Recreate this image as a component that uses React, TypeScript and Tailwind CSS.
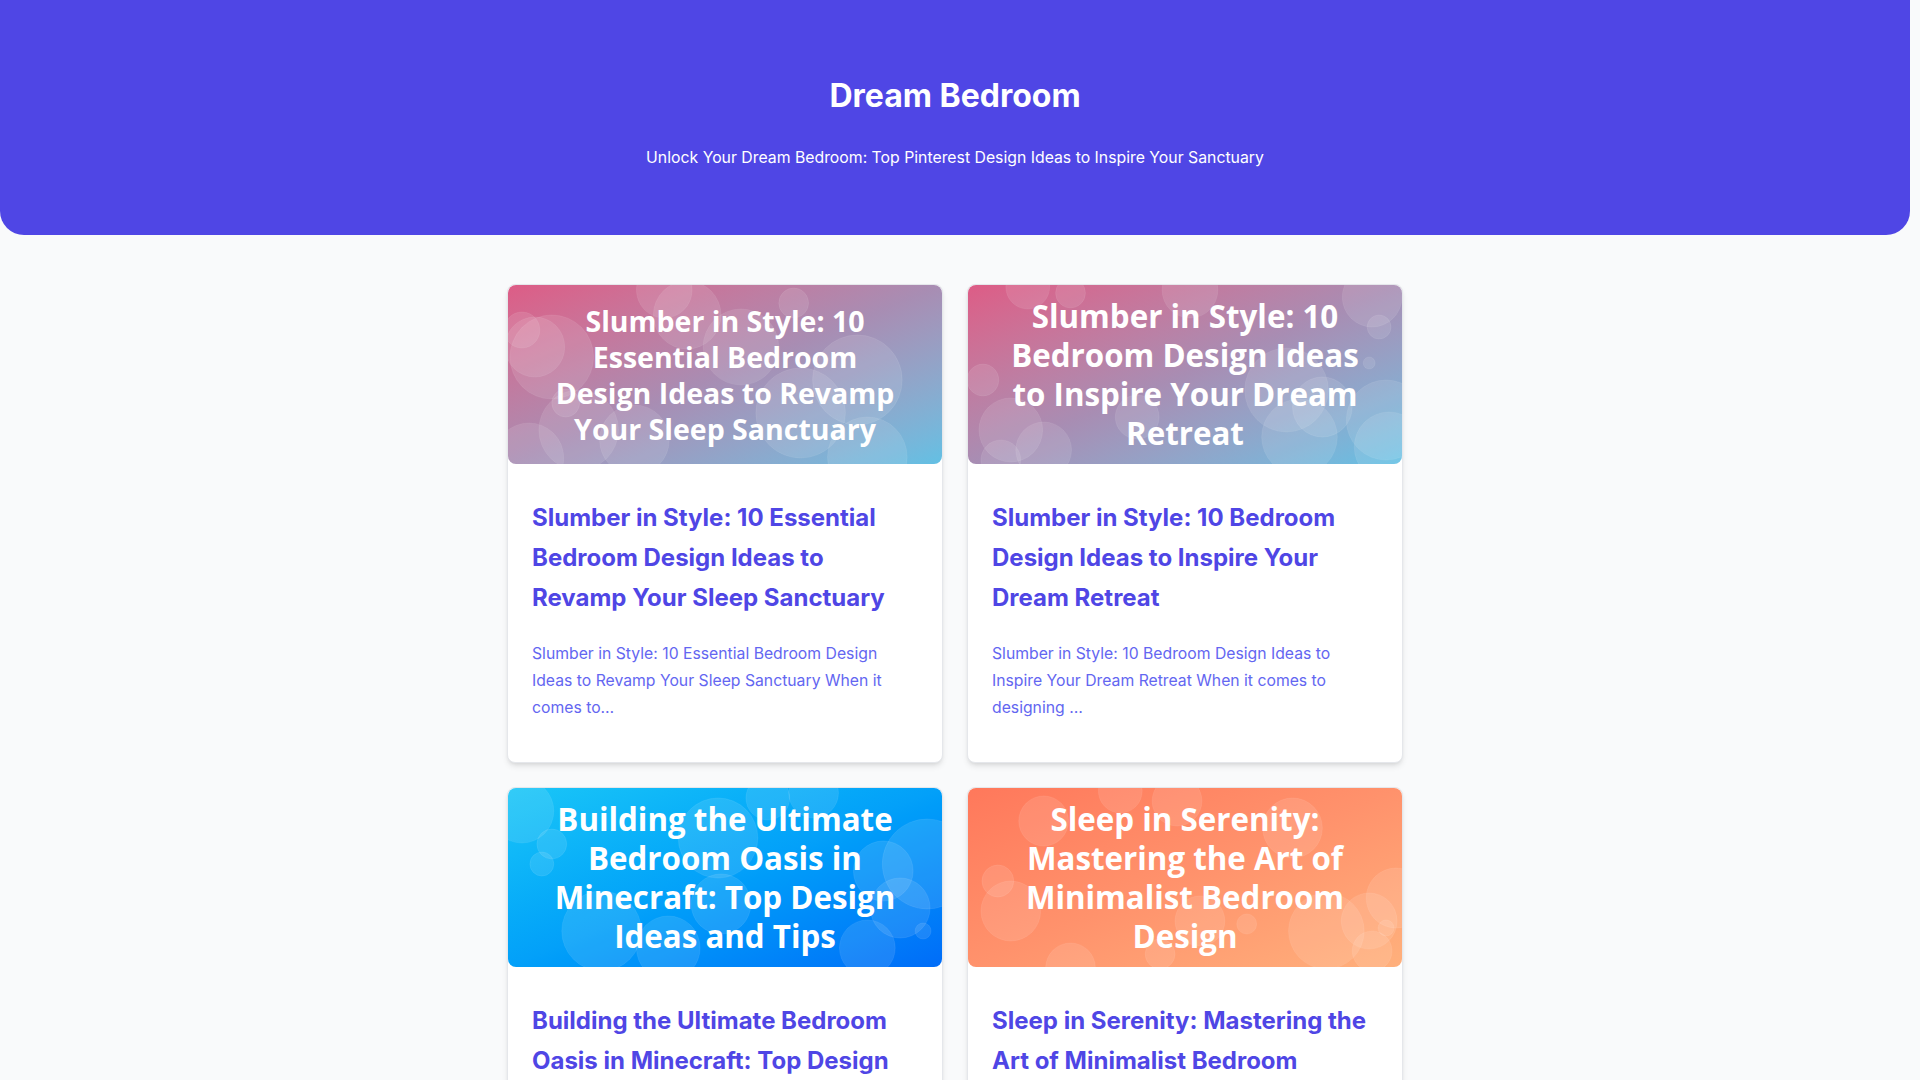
import React from "react";

// ─── Types ────────────────────────────────────────────────────────────────────

interface Bubble {
  x: number;
  y: number;
  r: number;
}

interface Post {
  title: string;
  excerpt: string;
  coverLines: string[];
  coverClass: string;
  textClass: string;
  bubbles: Bubble[];
}

// ─── Data ─────────────────────────────────────────────────────────────────────

const POSTS: Post[] = [
  {
    title:
      "Slumber in Style: 10 Essential Bedroom Design Ideas to Revamp Your Sleep Sanctuary",
    excerpt:
      "Slumber in Style: 10 Essential Bedroom Design Ideas to Revamp Your Sleep Sanctuary When it comes to…",
    coverLines: [
      "Slumber in Style: 10",
      "Essential Bedroom",
      "Design Ideas to Revamp",
      "Your Sleep Sanctuary",
    ],
    coverClass: "bg-linear-to-br from-[#dd5c86] via-[#a88db3] to-[#62c0e4]",
    textClass: "text-[28.5px] leading-[36px]",
    bubbles: [
      { x: 27, y: 62, r: 30 },
      { x: 44, y: 72, r: 42 },
      { x: 14, y: 45, r: 18 },
      { x: 157, y: 5, r: 28 },
      { x: 180, y: 30, r: 34 },
      { x: 234, y: 62, r: 38 },
      { x: 351, y: 95, r: 45 },
      { x: 127, y: 155, r: 35 },
      { x: 21, y: 173, r: 35 },
      { x: 361, y: 172, r: 40 },
      { x: 294, y: 128, r: 45 },
      { x: 71, y: 145, r: 40 },
      { x: 287, y: 18, r: 15 },
      { x: 58, y: 118, r: 14 },
    ],
  },
  {
    title:
      "Slumber in Style: 10 Bedroom Design Ideas to Inspire Your Dream Retreat",
    excerpt:
      "Slumber in Style: 10 Bedroom Design Ideas to Inspire Your Dream Retreat When it comes to designing …",
    coverLines: [
      "Slumber in Style: 10",
      "Bedroom Design Ideas",
      "to Inspire Your Dream",
      "Retreat",
    ],
    coverClass: "bg-linear-to-br from-[#dd5c86] via-[#a88db3] to-[#62c0e4]",
    textClass: "text-[31.3px] leading-[39px]",
    bubbles: [
      { x: 60, y: 2, r: 22 },
      { x: 103, y: 8, r: 15 },
      { x: 223, y: 5, r: 28 },
      { x: 406, y: 12, r: 30 },
      { x: 413, y: 42, r: 12 },
      { x: 43, y: 145, r: 32 },
      { x: 76, y: 165, r: 28 },
      { x: 33, y: 175, r: 20 },
      { x: 170, y: 132, r: 22 },
      { x: 320, y: 105, r: 42 },
      { x: 333, y: 152, r: 38 },
      { x: 420, y: 135, r: 40 },
      { x: 423, y: 162, r: 35 },
      { x: 356, y: 122, r: 30 },
      { x: 403, y: 78, r: 6 },
      { x: 15, y: 95, r: 16 },
    ],
  },
  {
    title:
      "Building the Ultimate Bedroom Oasis in Minecraft: Top Design Ideas and Tips",
    excerpt:
      "Building the Ultimate Bedroom Oasis in Minecraft: Top Design Ideas and Tips When it comes to…",
    coverLines: [
      "Building the Ultimate",
      "Bedroom Oasis in",
      "Minecraft: Top Design",
      "Ideas and Tips",
    ],
    coverClass: "bg-linear-to-br from-[#1ac6f7] via-[#03a0f9] to-[#006cf8]",
    textClass: "text-[31.3px] leading-[39px]",
    bubbles: [
      { x: 14, y: 23, r: 32 },
      { x: 44, y: 56, r: 15 },
      { x: 34, y: 76, r: 12 },
      { x: 261, y: 10, r: 22 },
      { x: 307, y: 5, r: 25 },
      { x: 421, y: 76, r: 45 },
      { x: 394, y: 120, r: 30 },
      { x: 417, y: 143, r: 8 },
      { x: 361, y: 160, r: 28 },
      { x: 94, y: 143, r: 40 },
      { x: 161, y: 160, r: 32 },
      { x: 214, y: 116, r: 30 },
      { x: 377, y: 83, r: 30 },
      { x: 211, y: 50, r: 40 },
    ],
  },
  {
    title:
      "Sleep in Serenity: Mastering the Art of Minimalist Bedroom Design",
    excerpt:
      "Sleep in Serenity: Mastering the Art of Minimalist Bedroom Design When it comes to creating a…",
    coverLines: [
      "Sleep in Serenity:",
      "Mastering the Art of",
      "Minimalist Bedroom",
      "Design",
    ],
    coverClass: "bg-linear-to-br from-[#ff785b] via-[#ff926c] to-[#ffb07c]",
    textClass: "text-[31.3px] leading-[39px]",
    bubbles: [
      { x: 76, y: 33, r: 25 },
      { x: 30, y: 93, r: 16 },
      { x: 43, y: 123, r: 30 },
      { x: 153, y: 3, r: 22 },
      { x: 210, y: 13, r: 25 },
      { x: 326, y: 40, r: 30 },
      { x: 430, y: 110, r: 30 },
      { x: 360, y: 143, r: 38 },
      { x: 403, y: 133, r: 28 },
      { x: 280, y: 136, r: 10 },
      { x: 233, y: 133, r: 25 },
      { x: 193, y: 166, r: 15 },
      { x: 103, y: 180, r: 25 },
      { x: 406, y: 163, r: 20 },
      { x: 420, y: 140, r: 8 },
    ],
  },
];

// ─── Cover ────────────────────────────────────────────────────────────────────

function Cover({ post }: { post: Post }) {
  return (
    <div
      className={`relative h-[179px] w-full overflow-hidden rounded-lg ${post.coverClass}`}
    >
      <svg
        className="absolute inset-0 h-full w-full"
        viewBox="0 0 436 179"
        preserveAspectRatio="none"
      >
        {post.bubbles.map((b, i) => (
          <circle
            key={i}
            cx={b.x}
            cy={b.y}
            r={b.r}
            fill="#ffffff"
            fillOpacity={0.11}
            stroke="#ffffff"
            strokeOpacity={0.08}
            strokeWidth={1}
          />
        ))}
      </svg>
      <div className="relative flex h-full flex-col items-center justify-center">
        {post.coverLines.map((line) => (
          <span
            key={line}
            className={`whitespace-nowrap font-['Open_Sans',sans-serif] font-bold text-white ${post.textClass}`}
          >
            {line}
          </span>
        ))}
      </div>
    </div>
  );
}

// ─── Card ─────────────────────────────────────────────────────────────────────

function PostCard({ post }: { post: Post }) {
  return (
    <article className="rounded-lg border border-gray-200 bg-white shadow-md">
      <Cover post={post} />
      <div className="px-6 pb-[41px] pt-[34px]">
        <h2 className="mb-[22px] text-2xl font-bold leading-10 text-[#4f46e5]">
          {post.title}
        </h2>
        <p className="text-[15.75px] leading-[27px] text-[#6366f1]">
          {post.excerpt}
        </p>
      </div>
    </article>
  );
}

// ─── Page ─────────────────────────────────────────────────────────────────────

export default function App() {
  return (
    <div className="min-h-screen bg-gray-50 pr-[10px] font-['Inter',sans-serif]">
      <header className="rounded-b-3xl bg-[#4f46e5] pb-[65px] pt-[76px] text-center text-white">
        <h1 className="text-[32px] font-bold leading-10">Dream Bedroom</h1>
        <p className="mt-[30px] text-[15.8px] leading-6">
          Unlock Your Dream Bedroom: Top Pinterest Design Ideas to Inspire Your
          Sanctuary
        </p>
      </header>

      <main className="mx-auto mt-[49px] grid max-w-4xl grid-cols-2 gap-6 pb-12">
        {POSTS.map((post) => (
          <PostCard key={post.title} post={post} />
        ))}
      </main>
    </div>
  );
}
